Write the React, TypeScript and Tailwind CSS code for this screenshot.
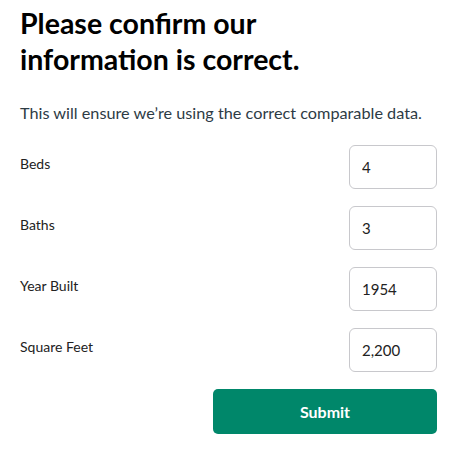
export default function App() {
  const fields = [
    { label: "Beds", value: "4" },
    { label: "Baths", value: "3" },
    { label: "Year Built", value: "1954" },
    { label: "Square Feet", value: "2,200" },
  ];

  return (
    <div className="w-[454px] h-[454px] bg-white pl-5 pr-[17px] pt-[5px] font-['Lato',sans-serif]">
      <h1 className="text-[28.5px] font-bold leading-[36px] text-black">
        Please confirm our
        <br />
        information is correct.
      </h1>
      <p className="mt-[26px] text-[16.25px] leading-[20px] text-[#2d3b45]">
        This will ensure we’re using the correct comparable data.
      </p>

      <div className="mt-[22px] flex flex-col gap-[17px]">
        {fields.map((f) => (
          <div key={f.label} className="flex items-center justify-between">
            <label className="text-[14px] text-[#222] -mt-[8px]">{f.label}</label>
            <input
              defaultValue={f.value}
              className="w-[88px] h-[44px] rounded-[6px] border border-[#c8c8cc] px-3 text-[15px] text-[#222] outline-none font-['Lato',sans-serif]"
            />
          </div>
        ))}
        <div className="flex justify-end">
          <button className="w-[224px] h-[45px] rounded-[5px] bg-[#00876a] text-white text-[16px] font-bold">
            Submit
          </button>
        </div>
      </div>
    </div>
  );
}
